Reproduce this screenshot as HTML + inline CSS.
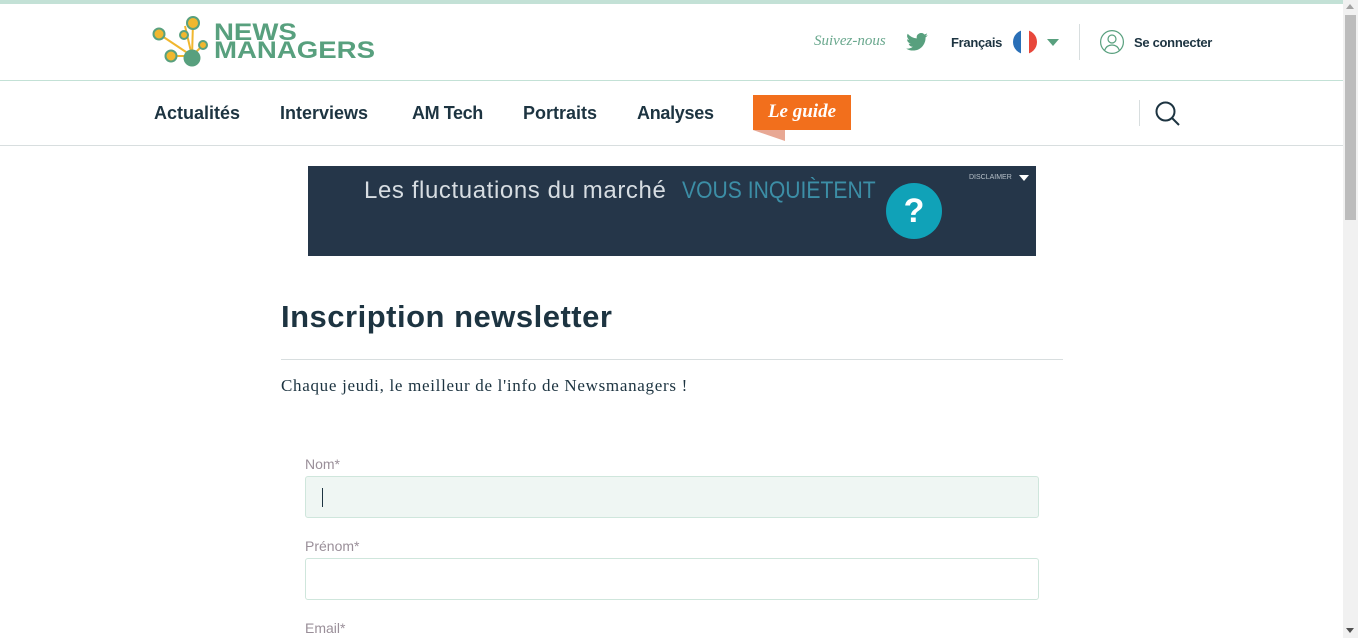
<!DOCTYPE html>
<html><head><meta charset="utf-8">
<style>
*{box-sizing:border-box;margin:0;padding:0}
html,body{width:1358px;height:638px;overflow:hidden;background:#fff;font-family:"Liberation Sans",sans-serif;color:#1d3441}
.topbar{position:absolute;left:0;top:0;width:1343px;height:4px;background:#c3e1d6}
.hdr{position:absolute;left:0;top:80px;width:1343px;height:1px;background:#c3e1d6}
.nav2{position:absolute;left:0;top:145px;width:1343px;height:1px;background:#d8dedf}
.sb{position:absolute;left:1343px;top:0;width:15px;height:638px;background:#f1f1f1}
.thumb{position:absolute;left:1345px;top:15px;width:11px;height:205px;background:#bcbcbc}
.abs{position:absolute}
.nav a{position:absolute;top:103px;font-weight:bold;font-size:18px;color:#1d3441;text-decoration:none}
.serif{font-family:"Liberation Serif",serif}
.lbl{position:absolute;left:305px;font-size:14px;color:#9a8f99}
.inp{position:absolute;left:305px;width:734px;height:42px;border:1px solid #cfe6dc;border-radius:3px;background:#fff}
</style></head><body>
<div class="topbar"></div>
<svg class="abs" style="left:150px;top:14px" width="70" height="56" viewBox="0 0 70 56">
<g stroke="#f0b72f" stroke-width="2" fill="none">
<line x1="9" y1="20" x2="42" y2="42"/><line x1="35" y1="12" x2="42" y2="42"/><line x1="43" y1="9" x2="42" y2="42"/>
<line x1="53" y1="31" x2="42" y2="42"/><line x1="21" y1="42" x2="42" y2="42"/></g>
<circle cx="43" cy="9" r="6" fill="#f0b72f" stroke="#58a07e" stroke-width="2"/>
<circle cx="9" cy="20" r="5.5" fill="#f0b72f" stroke="#58a07e" stroke-width="2"/>
<circle cx="34" cy="21" r="4" fill="#f0b72f" stroke="#58a07e" stroke-width="2"/>
<circle cx="53" cy="31" r="4" fill="#f0b72f" stroke="#58a07e" stroke-width="2"/>
<circle cx="21" cy="42" r="5.5" fill="#f0b72f" stroke="#58a07e" stroke-width="2"/>
<circle cx="42" cy="44" r="8.5" fill="#58a07e"/>
</svg>
<div class="abs" style="left:214px;top:24px;font-weight:bold;font-size:24px;line-height:18px;color:#58a07e;transform:scaleX(1.15);transform-origin:left top">NEWS<br>MANAGERS</div>

<div class="abs serif" style="left:814px;top:33px;font-style:italic;font-size:15px;color:#6aa88e">Suivez-nous</div>
<svg class="abs" style="left:906px;top:33px" width="22" height="18" viewBox="0 0 24 20"><path fill="#58a07e" d="M24 2.4a10 10 0 0 1-2.8.8A5 5 0 0 0 23.3.4a10 10 0 0 1-3.1 1.2A4.9 4.9 0 0 0 11.8 6 14 14 0 0 1 1.700.9a4.9 4.9 0 0 0 1.5 6.6A4.9 4.9 0 0 1 1 6.9a4.9 4.9 0 0 0 3.9 4.9 5 5 0 0 1-2.2.1 4.9 4.9 0 0 0 4.6 3.4A9.9 9.9 0 0 1 0 17.3 14 14 0 0 0 7.5 19.5c9.1 0 14-7.5 14-14v-.6A10 10 0 0 0 24 2.4z"/></svg>
<div class="abs" style="left:951px;top:35px;font-size:13px;font-weight:bold;color:#1d3441;letter-spacing:-0.3px">Français</div>
<svg class="abs" style="left:1013px;top:30px" width="24" height="24" viewBox="0 0 24 24"><clipPath id="c"><circle cx="12" cy="12" r="12"/></clipPath><g clip-path="url(#c)"><rect width="8" height="24" fill="#2a6fb7"/><rect x="8" width="8" height="24" fill="#fff"/><rect x="16" width="8" height="24" fill="#e8473b"/></g></svg>
<svg class="abs" style="left:1047px;top:39px" width="12" height="7"><path d="M0 0h12L6 7z" fill="#58a07e"/></svg>
<div class="abs" style="left:1079px;top:24px;width:1px;height:36px;background:#d8dedf"></div>
<svg class="abs" style="left:1100px;top:30px" width="24" height="24" viewBox="0 0 24 24" fill="none" stroke="#58a07e" stroke-width="1.2"><circle cx="12" cy="12" r="11.4"/><circle cx="12" cy="9" r="4"/><path d="M4.5 20.5c1.5-4 4-5.5 7.5-5.5s6 1.5 7.5 5.5"/></svg>
<div class="abs" style="left:1134px;top:35px;font-size:13px;font-weight:bold;color:#1d3441;letter-spacing:-0.3px">Se connecter</div>
<div class="hdr"></div>

<div class="nav">
<a style="left:154px">Actualités</a><a style="left:280px">Interviews</a><a style="left:412px;letter-spacing:-0.4px">AM Tech</a><a style="left:523px">Portraits</a><a style="left:637px;letter-spacing:-0.3px">Analyses</a>
</div>
<svg class="abs" style="left:753px;top:130px" width="33" height="11"><path d="M0 0h32v11z" fill="#e8a894"/></svg>
<div class="abs serif" style="left:753px;top:95px;width:98px;height:35px;background:#f26f1c;color:#fff;font-style:italic;font-weight:bold;font-size:19px;text-align:center;line-height:34px">Le guide</div>
<div class="abs" style="left:1139px;top:100px;width:1px;height:26px;background:#d8dedf"></div>
<svg class="abs" style="left:1154px;top:100px" width="28" height="28" viewBox="0 0 28 28" fill="none" stroke="#1d3441" stroke-width="2"><circle cx="11.5" cy="11.5" r="9"/><path d="M18 18l7 7"/></svg>
<div class="nav2"></div>

<div class="abs" style="left:308px;top:166px;width:728px;height:90px;background:#253649"></div>
<div class="abs" style="left:364px;top:177px;font-size:24px;color:#d7dde2;letter-spacing:0.6px">Les fluctuations du marché</div>
<div class="abs" style="left:682px;top:177px;font-size:24px;color:#3c8ea6;transform:scaleX(0.88);transform-origin:left top;white-space:nowrap">VOUS INQUIÈTENT</div>
<div class="abs" style="left:886px;top:183px;width:56px;height:56px;border-radius:50%;background:#10a2b8;color:#fff;font-size:34px;font-weight:bold;text-align:center;line-height:56px">?</div>
<div class="abs" style="left:969px;top:174px;font-size:7px;color:#b7c0c8">DISCLAIMER</div>
<svg class="abs" style="left:1019px;top:175px" width="10" height="6"><path d="M0 0h10L5 6z" fill="#fff"/></svg>

<div class="abs" style="left:281px;top:299px;font-size:31px;font-weight:bold;color:#1d3441;letter-spacing:0.5px">Inscription newsletter</div>
<div class="abs" style="left:281px;top:359px;width:782px;height:1px;background:#d8dedf"></div>
<div class="abs serif" style="left:281px;top:376px;font-size:17px;color:#1d3441;letter-spacing:0.7px">Chaque jeudi, le meilleur de l'info de Newsmanagers !</div>

<div class="lbl" style="top:456px">Nom*</div>
<div class="inp" style="top:476px;background:#eff6f3"><div class="abs" style="left:16px;top:11px;width:1px;height:19px;background:#1d3441"></div></div>
<div class="lbl" style="top:538px">Prénom*</div>
<div class="inp" style="top:558px"></div>
<div class="lbl" style="top:620px">Email*</div>

<div class="sb"></div>
<div class="thumb"></div>
<svg class="abs" style="left:1346px;top:4px" width="8" height="5"><path d="M0 5h8L4 0z" fill="#a3a3a3"/></svg>
<svg class="abs" style="left:1346px;top:628px" width="8" height="5"><path d="M0 0h8L4 5z" fill="#505050"/></svg>
</body></html>
